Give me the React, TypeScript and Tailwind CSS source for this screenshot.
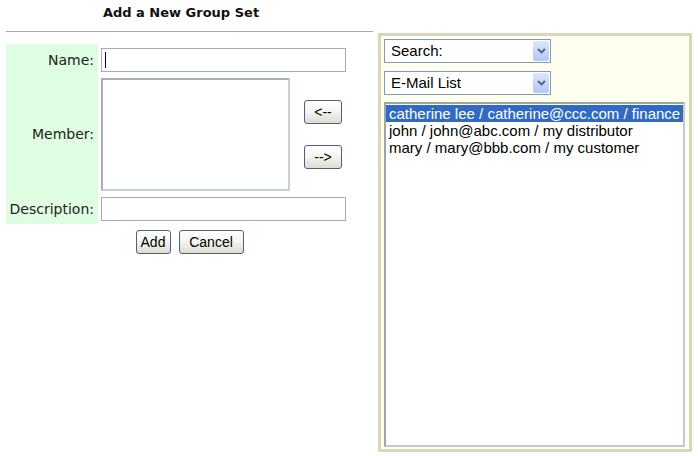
import { useState } from "react";

const people = [
  "catherine lee / catherine@ccc.com / finance",
  "john / john@abc.com / my distributor",
  "mary / mary@bbb.com / my customer",
];

function XpButton({ label, className = "" }: { label: string; className?: string }) {
  return (
    <button
      className={`h-[24px] rounded-[3px] border border-[#4f6079] bg-gradient-to-b from-white via-[#f4f4f0] to-[#dcdcd2] text-[14px] leading-none text-black font-['Liberation_Sans',Arial,sans-serif] ${className}`}
    >
      {label}
    </button>
  );
}

function FakeSelect({ value }: { value: string }) {
  return (
    <div className="relative h-[24px] w-[167px] border border-[#7f9db9] bg-white">
      <span className="block pl-[6px] pt-[2px] text-[15px] leading-[18px] text-black">{value}</span>
      <div className="absolute right-[1px] top-[1px] flex h-[20px] w-[16px] items-center justify-center rounded-[2px] bg-gradient-to-b from-[#dbe5fd] to-[#b3c8f7]">
        <svg width="9" height="6" viewBox="0 0 9 6">
          <path d="M1 1 L4.5 4.5 L8 1" fill="none" stroke="#4d6185" strokeWidth="1.8" />
        </svg>
      </div>
    </div>
  );
}

export default function App() {
  const [selected, setSelected] = useState(0);

  return (
    <div className="flex h-[456px] w-[698px] bg-white font-['Liberation_Sans',Arial,sans-serif]">
      <div className="ml-[6px] w-[367px]">
        <div className="h-[32px] border-b border-[#aaa9a2] pr-[17px] pt-[5px] text-center font-['DejaVu_Sans',Verdana,sans-serif] text-[13px] font-bold leading-[16px] text-[#111]">
          Add a New Group Set
        </div>

        <div className="mt-[12px] grid grid-cols-[92px_275px] font-['DejaVu_Sans',Verdana,sans-serif] text-[14px] text-[#222]">
          <div className="flex h-[31px] items-center justify-end bg-[#dffde0] pr-[4px] pt-[1px]">Name:</div>
          <div className="pl-[3px] pt-[4px]">
            <div className="flex h-[24px] w-[245px] items-center border border-[#a3adb8] bg-white pl-[3px]">
              <span className="h-[16px] w-px bg-black" />
            </div>
          </div>

          <div className="flex h-[119px] items-center justify-end bg-[#dffde0] pr-[4px]">Member:</div>
          <div className="flex pl-[3px] pt-[3px]">
            <div className="h-[113px] w-[189px] border-2 border-t-[#a5aeb9] border-l-[#a5aeb9] border-b-[#c9d0d8] border-r-[#c9d0d8] bg-white" />
            <div className="ml-[14px] flex flex-col pt-[22px]">
              <XpButton label="<--" className="w-[38px]" />
              <XpButton label="-->" className="mt-[21px] w-[38px]" />
            </div>
          </div>

          <div className="flex h-[30px] items-center justify-end bg-[#dffde0] pr-[4px]">Description:</div>
          <div className="pl-[3px] pt-[3px]">
            <div className="h-[24px] w-[245px] border border-[#a3adb8] bg-white" />
          </div>
        </div>

        <div className="mt-[6px] flex justify-center gap-[8px]">
          <XpButton label="Add" className="w-[35px]" />
          <XpButton label="Cancel" className="w-[65px]" />
        </div>
      </div>

      <div className="ml-[5px] mt-[33px] h-[419px] w-[314px] border-[3px] border-[#d9d6c0] bg-[#fffff0] p-[3px]">
        <FakeSelect value="Search:" />
        <div className="mt-[8px]">
          <FakeSelect value="E-Mail List" />
        </div>
        <div className="mt-[7px] h-[345px] w-[301px] border-2 border-t-[#9aa5b2] border-l-[#9aa5b2] border-b-[#c3cad3] border-r-[#c3cad3] bg-white pt-[1px]">
          {people.map((p, i) => (
            <div
              key={p}
              onClick={() => setSelected(i)}
              className={`h-[17px] whitespace-nowrap pl-[3px] text-[15px] leading-[17px] ${
                i === selected ? "bg-[#316ac5] text-white" : "text-black"
              }`}
            >
              {p}
            </div>
          ))}
        </div>
      </div>
    </div>
  );
}
